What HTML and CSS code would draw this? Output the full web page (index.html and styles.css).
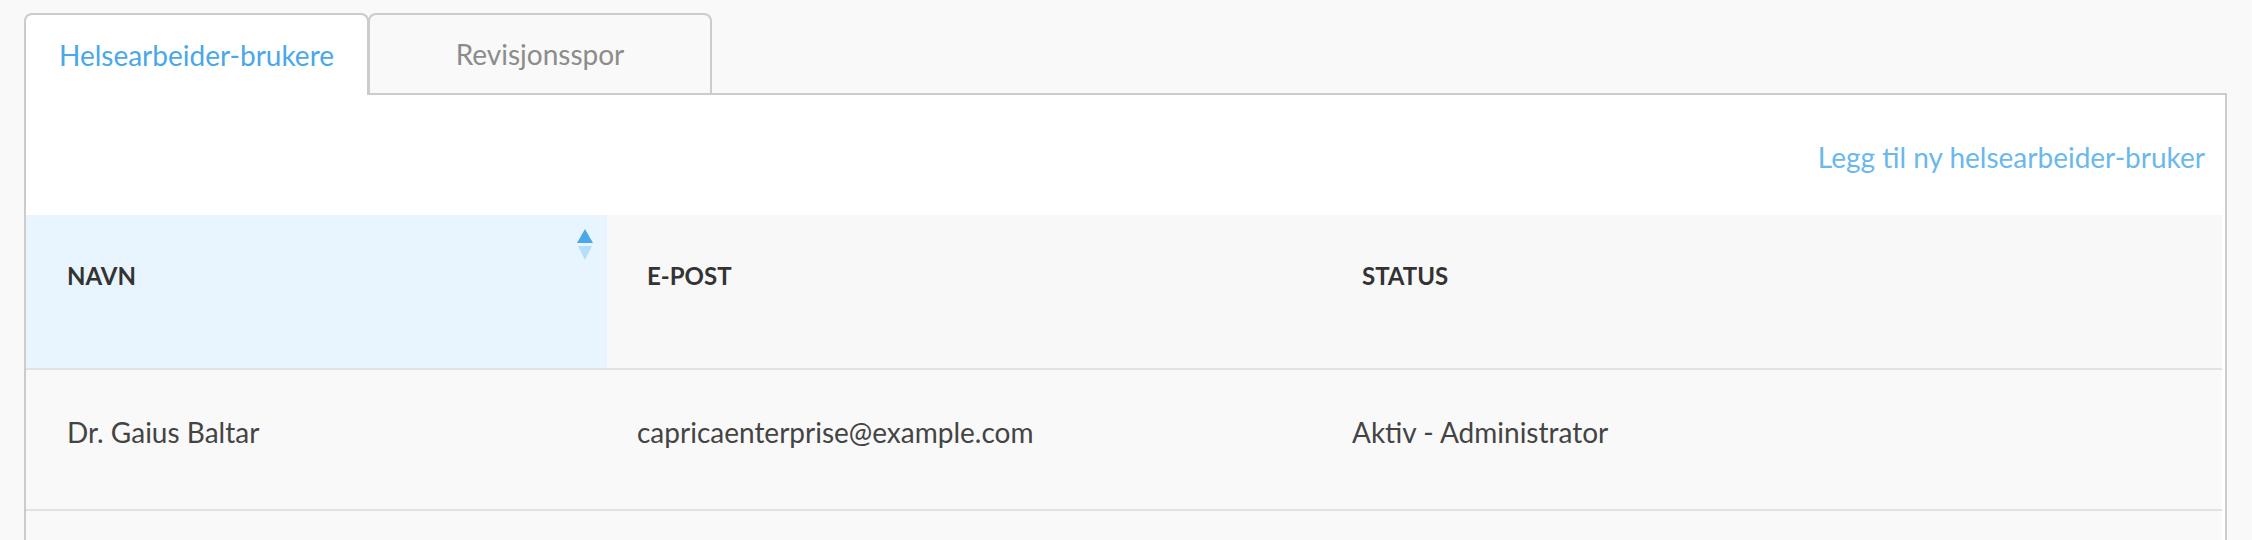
FILE: index.html
```html
<!DOCTYPE html>
<html lang="no">
<head>
<meta charset="utf-8">
<title>Helsearbeider-brukere</title>
<link rel="stylesheet" href="styles.css">
</head>
<body>
<div class="page">
  <div class="tabs">
    <div class="tab tab-active">Helsearbeider-brukere</div>
    <div class="tab tab-inactive">Revisjonsspor</div>
  </div>
  <div class="panel">
    <div class="toolbar">
      <a class="add-link" href="#">Legg til ny helsearbeider-bruker</a>
    </div>
    <div class="table">
      <div class="row head">
        <div class="cell hcell sorted">NAVN
          <svg class="sort" width="18" height="34" viewBox="0 0 18 34">
            <polygon points="9,0 17,14 1,14" fill="#4aa8e8"/>
            <polygon points="2,17 16,17 9,31" fill="#b5defa"/>
          </svg>
        </div>
        <div class="cell hcell">E-POST</div>
        <div class="cell hcell">STATUS</div>
      </div>
      <div class="row body">
        <div class="cell bcell first">Dr. Gaius Baltar</div>
        <div class="cell bcell">capricaenterprise@example.com</div>
        <div class="cell bcell">Aktiv - Administrator</div>
      </div>
      <div class="row filler"></div>
    </div>
  </div>
</div>
</body>
</html>
```
FILE: styles.css
```css
html, body {
  margin: 0;
  padding: 0;
  background: #f9f9f9;
  font-family: Lato, "Open Sans", sans-serif;
}

.page {
  padding: 13px 25px 0 24px;
}

.tabs {
  display: flex;
  align-items: flex-end;
  margin-bottom: -2px;
  position: relative;
  z-index: 1;
}

.tab {
  box-sizing: border-box;
  height: 82px;
  display: flex;
  align-items: center;
  justify-content: center;
  font-size: 28px;
  line-height: 34px;
  border: 2px solid #cccccc;
  border-radius: 8px 8px 0 0;
}

.tab-active {
  width: 345px;
  background: #ffffff;
  border-bottom: none;
  color: #4aa8e8;
}

.tab-inactive {
  width: 344px;
  margin-left: -1px;
  background: #f9f9f9;
  color: #8c8c8c;
}

.panel {
  border: 2px solid #cccccc;
  border-bottom: none;
  background: #ffffff;
  height: 445px;
  overflow: hidden;
}

.toolbar {
  display: flex;
  justify-content: flex-end;
  padding: 45px 20px 41px 0;
}

.add-link {
  font-size: 28px;
  line-height: 34px;
  color: #6ab8ec;
  text-decoration: none;
}

.table {
  margin-right: 3px;
}

.row {
  display: grid;
  grid-template-columns: 581px 715px 1fr;
  border-bottom: 2px solid #e2e2e2;
}

.head {
  background: #f8f8f8;
}

.hcell {
  font-size: 24px;
  line-height: 29px;
  font-weight: 700;
  color: #333333;
  padding: 46px 0 78px 40px;
}

.hcell.sorted {
  position: relative;
  background: #e8f5fe;
  padding-left: 41px;
}

.sort {
  position: absolute;
  top: 14px;
  right: 13px;
}

.body {
  background: #f9f9f9;
}

.bcell {
  font-size: 28px;
  line-height: 34px;
  color: #444444;
  padding: 45px 0 60px 30px;
}

.bcell.first {
  padding-left: 41px;
}

.filler {
  background: #f9f9f9;
  border-bottom: none;
  height: 29px;
}
```
